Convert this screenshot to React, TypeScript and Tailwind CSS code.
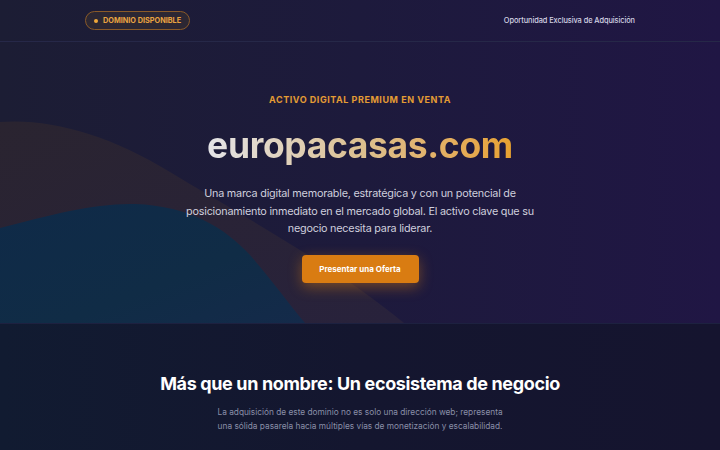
import React from "react";

export default function App() {
  const font = { fontFamily: "Inter, 'Open Sans', sans-serif" };
  return (
    <div className="w-[720px] h-[450px] overflow-hidden bg-[#13172f]" style={font}>
      <div className="relative h-[323px] bg-gradient-to-r from-[#1c1d34] via-[#1d1a3c] to-[#201644] overflow-hidden">
        <svg className="absolute left-0 top-0" width="720" height="323" viewBox="0 0 720 323">
          <defs>
            <linearGradient id="dw" x1="0" y1="0" x2="1" y2="1">
              <stop offset="0" stopColor="#2a2430" />
              <stop offset="1" stopColor="#28223c" />
            </linearGradient>
            <linearGradient id="tw" x1="0" y1="0" x2="1" y2="1">
              <stop offset="0" stopColor="#0f2a48" />
              <stop offset="0.6" stopColor="#102c46" />
              <stop offset="1" stopColor="#142a4a" />
            </linearGradient>
          </defs>
          <path d="M0,122 C50,118 110,135 170,172 C250,220 340,270 404,323 L0,323 Z" fill="url(#dw)" />
          <path d="M0,228 C50,215 95,203 135,204 C190,206 225,228 250,255 C270,278 290,305 305,323 L0,323 Z" fill="url(#tw)" />
        </svg>
        <div className="relative h-[42px] border-b border-[#262848]">
          <div className="mx-auto w-[550px] h-full flex items-center justify-between">
            <div className="flex items-center gap-[5px] h-[19px] px-[8px] rounded-full border border-[#8a5a28] bg-[#2c2733]">
              <span className="w-[4px] h-[4px] rounded-full bg-[#f0a83a]" />
              <span className="text-[7.3px] font-bold text-[#e9a441] leading-none">DOMINIO DISPONIBLE</span>
            </div>
            <span className="text-[7.4px] font-medium text-[#d4d4e4] tracking-[-0.01em]">Oportunidad Exclusiva de Adquisición</span>
          </div>
        </div>
        <div className="relative flex flex-col items-center pt-[52px]">
          <div className="text-[9px] font-bold tracking-[0.06em] text-[#e49c34] leading-[12px]">ACTIVO DIGITAL PREMIUM EN VENTA</div>
          <div className="mt-[18px] text-[35.5px] font-bold leading-[44px] tracking-[-0.01em] bg-gradient-to-r from-[#e4e4e8] via-[#dcc090] to-[#e8a12e] bg-clip-text text-transparent">
            europacasas.com
          </div>
          <p className="mt-[17px] w-[380px] text-center text-[10.8px] leading-[17.5px] text-[#cfcfdd] tracking-[-0.02em]">
            Una marca digital memorable, estratégica y con un potencial de posicionamiento inmediato en el mercado global. El activo clave que su negocio necesita para liderar.
          </p>
          <button className="mt-[17px] w-[117px] h-[28px] rounded-[4px] bg-[#d97c12] text-white text-[8px] font-bold shadow-[0_4px_14px_rgba(217,124,18,0.45)]">
            Presentar una Oferta
          </button>
        </div>
      </div>
      <div className="h-[127px] border-t border-[#1d2140] bg-gradient-to-r from-[#111b31] via-[#14162f] to-[#15142f] flex flex-col items-center">
        <h2 className="mt-[48px] text-[18px] font-bold text-white leading-[24px] tracking-[-0.02em]">Más que un nombre: Un ecosistema de negocio</h2>
        <p className="mt-[9px] text-center text-[8.3px] leading-[14px] text-[#8a8fa8]">
          La adquisición de este dominio no es solo una dirección web; representa
          <br />
          una sólida pasarela hacia múltiples vías de monetización y escalabilidad.
        </p>
      </div>
    </div>
  );
}
